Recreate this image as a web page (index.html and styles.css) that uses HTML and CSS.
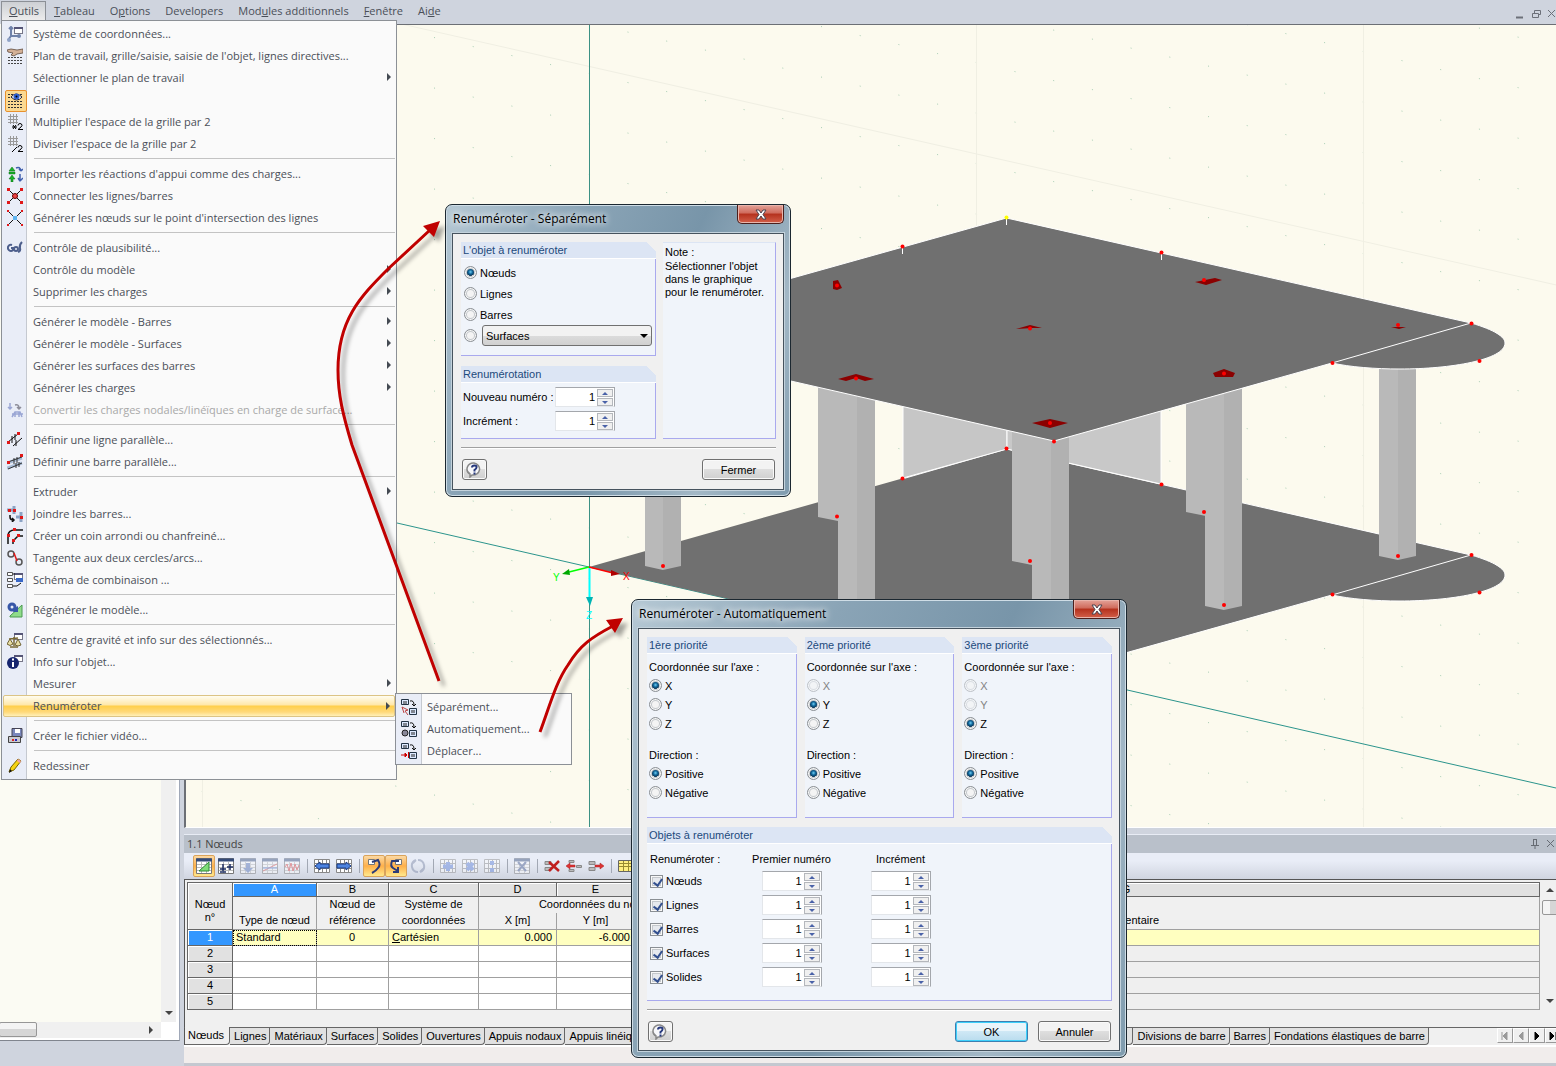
FILE: index.html
```html
<!DOCTYPE html>
<html lang="fr">
<head>
  <meta charset="UTF-8" />
  <meta name="viewport" content="width=device-width, initial-scale=1.0" />
  <title>Renuméroter</title>
  <link rel="stylesheet" href="styles.css">
</head>
<body>

<!-- icon set -->
<svg class="defs" width="0" height="0">
  <defs>
    <g id="win"><rect x="7.500" y="1.500" width="8" height="6" fill="#fff" stroke="#778"/><path d="M7 2h9" stroke="#557" stroke-width="2"/></g>
    <g id="redX" fill="#e01818"><rect x="0" y="0" width="3" height="3"/><rect x="13" y="0" width="3" height="3"/><rect x="0" y="13" width="3" height="3"/><rect x="13" y="13" width="3" height="3"/></g>
    <g id="i-coord"><path d="M4 2v8l-3 4M4 10h7M2 3l2-2 2 2" fill="none" stroke="#6f82aa" stroke-width="2"/><circle cx="2" cy="14" r="2" fill="#8fa3c8"/><circle cx="12" cy="10" r="2" fill="#6f82aa"/><use href="#win"/></g>
    <g id="i-plan"><path d="M1 9.500h15M1 12.500h15M1 15.500h15" stroke="#444" stroke-dasharray="2 1"/><path d="M0 2l4-1 6 1 6-1v4l-6 1-3 2-3-1 2-2-5-1z" fill="#d3b096" stroke="#5e4a3c" stroke-width=".8"/></g>
    <g id="i-grid"><path d="M1 2.500h15M1 5.500h15M1 9.500h15M1 12.500h15M1 15.500h15" stroke="#333" stroke-dasharray="2 1"/><path d="M4 5q5-6 11 0-5 6-11 0z" fill="#fff" stroke="#223"/><circle cx="9.500" cy="4.500" r="3" fill="#2f5fd0"/><circle cx="9.500" cy="4.500" r="1" fill="#000"/></g>
    <g id="hash"><path d="M3.500 0v10M6.500 0v10M9.500 0v10M1 2.500h10M1 5.500h10M1 8.500h10" stroke="#999"/></g>
    <g id="two"><path d="M11 11.500q0-2 2-2t2 2q0 1-4 4h5" fill="none" stroke="#000"/></g>
    <g id="i-mul"><use href="#hash"/><use href="#two"/><path d="M5 13h5M6 11l3 4M9 11l-3 4" stroke="#000"/></g>
    <g id="i-div"><use href="#hash"/><use href="#two"/><path d="M5 16l5-5" stroke="#000"/></g>
    <g id="i-import"><path d="M5 1l3 4H2zM2 6h6v2H2zM5 9l3 4H6v3H4v-3H2z" fill="#18b428" stroke="#0b6d16" stroke-width=".5"/><path d="M9 2q4-2 5 3M14 5l-2-2M14 5l2-2M13 8v6M13 15l-2-3M13 15l3-3" fill="none" stroke="#3f5fae" stroke-width="1.500"/></g>
    <g id="i-connect"><path d="M1 1l14 14M15 1L1 15" stroke="#111"/><circle cx="8" cy="8" r="2.500" fill="#e44" stroke="#600"/><use href="#redX"/></g>
    <g id="i-inter"><path d="M1 1l14 14M15 1L1 15" stroke="#111"/><rect x="6" y="6" width="4" height="4" fill="#5fb4f0"/><g fill="#e01818"><rect width="2" height="2"/><rect x="14" width="2" height="2"/><rect y="14" width="2" height="2"/><rect x="14" y="14" width="2" height="2"/></g></g>
    <g id="i-plaus" fill="none" stroke="#4d5f8c" stroke-width="2"><path d="M5 5a3 3 0 1 0 1 5V8H4"/><circle cx="9" cy="9" r="2"/><path d="M15 2q-3 3-2 6t-2 4"/></g>
    <g id="i-conv" fill="none" stroke="#9aa6d4" stroke-width="1.500"><path d="M3 1v6M1 5l2 2 2-2"/><path d="M8 3q4-1 4 3M10 5l2 2 2-2" stroke="#8c8c98"/><path d="M5 15l3-5h5l2 5M5 12h11M8 10v5M12 10v5"/></g>
    <g id="i-lpar"><path d="M1 10L11 2M6 14l9-8M5 4v7M8 2v6M9 8v6" stroke="#111"/><path d="M0 9h3v3H0zM10 0h3v3h-3z" fill="#e01818"/></g>
    <g id="i-bpar"><path d="M0 9l15-5M0 14l15-5" stroke="#a9bcd6" stroke-width="3"/><path d="M1 8l14-5M1 15l14-6M7 4v6M10 3v6M9 9v5M12 8v5" stroke="#333"/><path d="M0 7h3v3H0zM13 0h3v3h-3z" fill="#e01818"/></g>
    <g id="i-join"><path d="M0 4h6M7 0v8M14 6v10M9 11h6" stroke="#8ba3c4" stroke-width="3"/><path d="M3 9v2q0 3 3 3M5 12l2 2-2 2" fill="none" stroke="#111" stroke-width="1.500"/><path d="M1 3h3v3H1zM6 3h3v3H6zM13 10h3v3h-3z" fill="#e01818"/></g>
    <g id="i-round"><path d="M1 16V8q0-6 7-6h8M6 16v-3l5-5h5" fill="none" stroke="#111" stroke-width="1.500"/><path d="M0 6h3v3H0zM6 0h3v3H6zM5 11h3v3H5zM10 6h3v3h-3z" fill="#e01818"/></g>
    <g id="i-tang" fill="none" stroke="#555" stroke-width="1.500"><circle cx="4" cy="4" r="3"/><circle cx="12" cy="12" r="3"/><path d="M7 3l3 8" stroke="#e01818"/></g>
    <g id="i-schema"><path d="M.500.500h5v3h-5zM.500 6.500h5v3h-5zM.500 12.500h5v3h-5z" fill="#fff" stroke="#555"/><use href="#win"/><path d="M9 6h7v4H9z" fill="#3767c8"/><path d="M6 14h4l4-3M6 2h2" stroke="#111" fill="none"/></g>
    <g id="i-regen"><path d="M3 14L15 3v12H3z" fill="#8fdc8a" stroke="#4a9b50"/><circle cx="5" cy="5" r="3" fill="none" stroke="#3757a8" stroke-width="3"/><path d="M8 6l3-2v6H6z" fill="#3757a8"/></g>
    <g id="i-grav"><use href="#win"/><path d="M7 5v9M3 15h8M2 7l9-1" stroke="#7a6a35" stroke-width="1.500"/><path d="M0 12l3-5 3 5q-3 3-6 0zM8 13l3-6 3 6q-3 2-6 0z" fill="#e9dfa5" stroke="#6f6232"/></g>
    <g id="i-info"><use href="#win"/><circle cx="6" cy="9" r="6" fill="#15246e"/><path d="M6 8v5M6 4.500v2" stroke="#fff" stroke-width="2"/></g>
    <g id="i-video"><path d="M5 .500h10v9H5z" fill="#7a87bc" stroke="#445"/><path d="M8 1h5v4H8z" fill="#fff"/><path d="M1.500 8.500h12v6h-12z" fill="#c9c9cf" stroke="#444"/><path d="M5 11h2v2H5z" fill="#d22"/><path d="M8 11h2v2H8z" fill="#22b"/></g>
    <g id="i-pen"><path d="M2 14l2-5 7-8 3 2-7 9z" fill="#f5d313" stroke="#7a6500"/><path d="M11 1l3 2-1 2-3-2z" fill="#f2a0a8"/><path d="M2 15l1-4 2 2z" fill="#111"/></g>
    <g id="renum"><path d="M.500.500h7v5h-7zM8.500 9.500h7v6h-7z" fill="#dce9ff" stroke="#234"/><path d="M3 2v3M5 2v3M11 11v3M13 11v3" stroke="#222"/><path d="M9 2q4-1 4 4M11 5l2 2 2-2" fill="none" stroke="#111"/></g>
    <g id="i-sep"><use href="#renum"/><path d="M1 8l6 3-3 1 3 4M1 8l2 6" stroke="#b44" fill="none"/></g>
    <g id="i-auto"><use href="#renum"/><circle cx="4" cy="12" r="3" fill="#889" stroke="#222"/></g>
    <g id="i-move"><use href="#renum"/><path d="M0 12h4M4 10l2 2-2 2zM7.500 9v6" fill="#c00" stroke="#c00"/></g>
    <!-- table toolbar -->
    <g id="sheet"><path d="M.500.500h15v15H.500z" fill="#fff" stroke="#777"/><path d="M0 2h16" stroke="#344a78" stroke-width="3"/><path d="M1 6.500h14M1 9.500h14M1 12.500h14M5.500 4v11M10.500 4v11" stroke="#bbb"/></g>
    <g id="t-edit"><use href="#sheet"/><path d="M3 13L13 4v9z" fill="#7fdc78" stroke="#2c8a35"/></g>
    <g id="t-ins"><use href="#sheet"/><path d="M5 6v7M2 11h6M2 14h6M9 9h6M12 6v6" stroke="#1c2c60" stroke-width="1.500"/></g>
    <g id="t-down"><use href="#sheet"/><path d="M6 5h4v5h3l-5 5-5-5h3z" fill="#5573b8"/></g>
    <g id="t-flag"><use href="#sheet"/><path d="M1 13l6-3 8-4" stroke="#d44" fill="none"/><path d="M1 10h14" stroke="#36c"/></g>
    <g id="t-wave"><use href="#sheet"/><path d="M1 9l2-3 2 7 2-8 2 8 2-7 2 6 2-5" stroke="#d33" fill="none"/></g>
    <g id="grid2"><path d="M.500 1.500h15v13H.500zM1 5.500h14M1 10.500h14M4.500 2v12M8.500 2v12M12.500 2v12" fill="#fff" stroke="#888"/></g>
    <g id="t-left"><use href="#grid2"/><path d="M1 8l5-4v2h9v4H6v2z" fill="#4c83e0" stroke="#1b3c86"/></g>
    <g id="t-right"><use href="#grid2"/><path d="M15 8l-5-4v2H1v4h9v2z" fill="#4c83e0" stroke="#1b3c86"/></g>
    <g id="t-undo"><path d="M2.500 1.500h6v5h-6z" fill="#fff" stroke="#777"/><path d="M6 4l6-2q3 5 0 8-2 3-6 5" fill="none" stroke="#2c3c78" stroke-width="2"/></g>
    <g id="t-redo"><path d="M7.500 1.500h6v5h-6z" fill="#fff" stroke="#777"/><path d="M11 3H4Q2 8 5 10t5 3M10 9v5H5" fill="none" stroke="#2c3c78" stroke-width="2"/></g>
    <g id="t-sync" fill="none" stroke="#7a86a4" stroke-width="2"><path d="M6 2q-5 2-4 7t6 5M10 14q5-2 4-7T8 2M6 2l-3 3M10 14l3-3"/></g>
    <g id="t-add"><use href="#grid2"/><path d="M8 4v9M3 8.500h10" stroke="#5b7fd8" stroke-width="4"/></g>
    <g id="t-mulb"><use href="#grid2"/><path d="M5 5l6 7M11 5l-6 7" stroke="#5b7fd8" stroke-width="4"/></g>
    <g id="t-divb"><use href="#grid2"/><path d="M6 3h4v4H6zM6 10h4v4H6z" fill="#5b7fd8"/></g>
    <g id="t-cross"><use href="#sheet"/><path d="M4 4l8 9M12 4l-8 9" stroke="#44598f" stroke-width="2"/></g>
    <g id="bars"><path d="M1 3.500h6v3H1zM1 9.500h6v3H1z" fill="#bbb" stroke="#888"/></g>
    <g id="t-del"><use href="#bars"/><path d="M5 4l10 9M15 3L5 13" stroke="#c02020" stroke-width="2.500"/></g>
    <g id="t-rl"><path d="M3 2.500h5v2H3zM3 11.500h5v2H3zM10.500 7.500h5v2h-5z" fill="#bbb" stroke="#888"/><path d="M0 8l4-3v2h5v2H4v2z" fill="#d33" stroke="#a22" stroke-width=".5"/></g>
    <g id="t-rr"><use href="#bars"/><path d="M16 8l-4-3v2H7v2h5v2z" fill="#d33" stroke="#a22" stroke-width=".5"/></g>
    <g id="t-yellow"><path d="M.500 2.500h15v11H.500z" fill="#ffef80" stroke="#666"/><path d="M1 5.500h14M1 8.500h14M5.500 3v10M10.500 3v10" stroke="#998a30"/></g>
    <g id="help"><path d="M8 1a6.500 6 0 1 1-2 12l-2 2v-3A6.500 6 0 0 1 8 1z" fill="#f7f7fa" stroke="#888" stroke-width="1.500"/><path d="M6 5.500q0-2 2.500-2t2 2q0 1-2 2.500v1.500M8.500 10.500v2" fill="none" stroke="#26387c" stroke-width="2"/></g>
    <g id="close"><path d="M2 1h3l2 3 2-3h3L9 5.500 12 10H9L7 7l-2 3H2l3-4.500z" fill="#fff" stroke="#4b4450"/></g>
  </defs>
</svg>

<nav class="menubar">
  <button class="open"><u>O</u>utils</button>
  <button><u>T</u>ableau</button>
  <button>O<u>p</u>tions</button>
  <button>Developers</button>
  <button>Mod<u>u</u>les additionnels</button>
  <button><u>F</u>enêtre</button>
  <button>Ai<u>d</u>e</button>
  <svg class="mdi" width="40" height="12" fill="none" stroke="#6c7079"><path d="M1 9.500h7" stroke-width="2"/><path d="M17.500 5.500h6v4h-6zM19.500 5V2.500h6v4H24M33 2l7 7M40 2l-7 7"/></svg>
</nav>

<main>
  <aside class="tree">
    <div class="tree-body"></div>
    <div class="vbar"></div>
    <div class="hbar"><span class="thumb"></span></div>
  </aside>

  <section class="work">
    <div class="viewport">
      <svg class="scene" width="100%" height="100%">
        <defs>
          <pattern id="dots" width="38.700" height="50.500" patternUnits="userSpaceOnUse" patternTransform="matrix(1 .2326 0 1 821 26)">
            <rect width="1" height="1" fill="#a9cdb4"/>
          </pattern>
        </defs>
        <g transform="translate(-186 -25)">
          <rect x="186" y="25" width="3000" height="2000" fill="url(#dots)"/>
          <path d="M202.500 25v1200M976.500 25v1200M1363.500 25v1200M397 23l2000 452" fill="none" stroke="#f0efe3"/>
          <path d="M589.500 25v1200" stroke="#3c9184"/>
          <path d="M397 523l192 44 967 221 700 160" fill="none" stroke="#2b948c"/>

          <!-- lower slab -->
          <path d="M1006.500 449L1471 555C1495 562 1505 569 1505 575C1505 592 1450 601 1400 601C1375 601 1350 599 1332 595L1054 673L589 567z" fill="#707070"/>
          <path d="M902 479L1006.500 449L1471 555C1495 562 1505 569 1505 575C1505 592 1450 601 1400 601C1375 601 1350 599 1332 595L1054 673M1332 595l139-40" fill="none" stroke="#fff"/>

          <!-- walls -->
          <path d="M903 400l104 22v27l-104 29z" fill="#c6c6c6" stroke="#fff"/>
          <path d="M1007 422l154-20v82l-154-35z" fill="#c8c8c8" stroke="#fff"/>

          <!-- columns -->
          <g fill="#b9b9b9">
            <path d="M645 480h18v90l-18-4z"/>
            <path d="M818 380h20v141l-20-4z"/>
            <path d="M838 380h19v260h-19z"/>
            <path d="M1012 420h20v145l-20-4z"/>
            <path d="M1032 420h19v220h-19z"/>
            <path d="M1186 380h20v136l-20-4z"/>
            <path d="M1205 380h19v230l-19-4z"/>
            <path d="M1379 360h19v200l-19-4z"/>
          </g>
          <g fill="#b1b1b1">
            <path d="M663 480h18v86l-18 4z"/>
            <path d="M857 380h18v260h-18z"/>
            <path d="M1051 420h18v220h-18z"/>
            <path d="M1224 380h18v226l-18 4z"/>
            <path d="M1398 360h18v196l-18 4z"/>
          </g>

          <!-- upper slab -->
          <path d="M1006.500 218L1471 323C1495 330 1505 337 1505 343C1505 360 1450 369 1400 369C1375 369 1350 367 1332 363L1054 441L589 335z" fill="#707070" stroke="#fff"/>
          <path d="M1332 363l139-40M1006.500 219v6M902.500 248v6M1161.500 254v6" stroke="#fff"/>

          <g fill="#8b0000">
            <path d="M833 281l5-1 4 8-5 2-4-1z"/>
            <path d="M1016 329l14-4 12 3-9 0z"/>
            <path d="M838 379l18-5 18 5-9 2-9-3-10 3z"/>
            <path d="M1032 423l18-4 18 4-18 5z"/>
            <path d="M1195 282l20-4 7 2-16 5z"/>
            <path d="M1213 373l11-4 11 4-2 4h-18z"/>
            <path d="M1391 327h15l-7 2z"/>
          </g>
          <circle cx="1006.500" cy="217.500" r="2" fill="#ff0"/>
          <g fill="#f00">
            <circle cx="902.500" cy="246.500" r="2"/><circle cx="1161.500" cy="252.500" r="2"/>
            <circle cx="837" cy="285.500" r="2"/><circle cx="1030" cy="328.500" r="2"/>
            <circle cx="856" cy="378.500" r="2"/><circle cx="1050" cy="423" r="2"/>
            <circle cx="1054" cy="441.500" r="2"/><circle cx="1204" cy="280" r="2"/>
            <circle cx="1224" cy="373.500" r="2"/><circle cx="1398" cy="325" r="2"/>
            <circle cx="1471.500" cy="323.500" r="2"/><circle cx="1479.500" cy="361" r="2"/>
            <circle cx="1332.500" cy="363" r="2"/><circle cx="1006.500" cy="448.500" r="2"/>
            <circle cx="902.500" cy="478.500" r="2"/><circle cx="1161.500" cy="484.500" r="2"/>
            <circle cx="837" cy="516.500" r="2"/><circle cx="1030" cy="561" r="2"/>
            <circle cx="1204" cy="512" r="2"/><circle cx="1224" cy="605" r="2"/>
            <circle cx="1398" cy="556" r="2"/><circle cx="1471.500" cy="555" r="2"/>
            <circle cx="1479.500" cy="592.500" r="2"/><circle cx="1332.500" cy="594.500" r="2"/>
            <circle cx="663" cy="566" r="2"/>
          </g>

          <!-- axes -->
          <path d="M589 567l24 6" stroke="#f00" stroke-width="1.500"/>
          <path d="M620 574l-9 2v-6z" fill="#b00000"/>
          <path d="M589 567l-20 5" stroke="#0f0" stroke-width="1.500"/>
          <path d="M562 574l7-5 1 6z" fill="#00a800"/>
          <path d="M589.500 568v30" stroke="#0ff" stroke-width="2"/>
          <path d="M586 597h7l-3 9z" fill="#00b4b4"/>
          <text x="623" y="580" fill="#f00">X</text>
          <text x="553" y="581" fill="#0f0">Y</text>
          <text x="586" y="619" fill="#0ff">Z</text>
        </g>
      </svg>
    </div>

    <div class="panel">
      <header class="panel-title">
        <h2>1.1 Nœuds</h2>
        <svg width="24" height="12" fill="none" stroke="#666b73"><path d="M3.500 1v6M6.500 1v6M3 1.500h4M1 7.500h8M5 8v3M17 2l7 7M24 2l-7 7"/></svg>
      </header>
      <div class="toolbar">
        <button class="on"><svg><use href="#t-edit"/></svg></button>
        <button><svg><use href="#t-ins"/></svg></button>
        <button disabled><svg><use href="#t-down"/></svg></button>
        <button disabled><svg><use href="#t-flag"/></svg></button>
        <button disabled><svg><use href="#t-wave"/></svg></button>
        <i></i>
        <button><svg><use href="#t-left"/></svg></button>
        <button><svg><use href="#t-right"/></svg></button>
        <i></i>
        <button class="on"><svg><use href="#t-undo"/></svg></button>
        <button class="on"><svg><use href="#t-redo"/></svg></button>
        <button disabled><svg><use href="#t-sync"/></svg></button>
        <i></i>
        <button disabled><svg><use href="#t-add"/></svg></button>
        <button disabled><svg><use href="#t-mulb"/></svg></button>
        <button disabled><svg><use href="#t-divb"/></svg></button>
        <i></i>
        <button disabled><svg><use href="#t-cross"/></svg></button>
        <i></i>
        <button><svg><use href="#t-del"/></svg></button>
        <button><svg><use href="#t-rl"/></svg></button>
        <button><svg><use href="#t-rr"/></svg></button>
        <i></i>
        <button><svg><use href="#t-yellow"/></svg></button>
      </div>

      <div class="sheet">
        <table>
          <colgroup>
            <col class="c-num"><col class="c-a"><col class="c-b"><col class="c-c"><col class="c-d"><col class="c-d"><col class="c-d"><col>
          </colgroup>
          <thead>
            <tr class="letters">
              <th rowspan="3" class="corner">Nœud<br>n°</th>
              <th class="sel">A</th><th>B</th><th>C</th><th>D</th><th>E</th><th></th><th>G</th>
            </tr>
            <tr class="names">
              <th></th><th>Nœud de</th><th>Système de</th><th colspan="3">Coordonnées du nœud</th><th></th>
            </tr>
            <tr class="names last">
              <th>Type de nœud</th><th>référence</th><th>coordonnées</th><th>X [m]</th><th>Y [m]</th><th></th><th>Commentaire</th>
            </tr>
          </thead>
          <tbody>
            <tr class="current"><th>1</th><td class="focus">Standard</td><td class="mid">0</td><td><u>C</u>artésien</td><td class="num">0.000</td><td class="num">-6.000</td><td></td><td></td></tr>
            <tr><th>2</th><td></td><td></td><td></td><td></td><td></td><td></td><td></td></tr>
            <tr><th>3</th><td></td><td></td><td></td><td></td><td></td><td></td><td></td></tr>
            <tr><th>4</th><td></td><td></td><td></td><td></td><td></td><td></td><td></td></tr>
            <tr><th>5</th><td></td><td></td><td></td><td></td><td></td><td></td><td></td></tr>
          </tbody>
        </table>
        <div class="vbar up"><span class="thumb"></span></div>
      </div>

      <div class="tabs">
        <button class="active">Nœuds</button>
        <button>Lignes</button>
        <button>Matériaux</button>
        <button>Surfaces</button>
        <button>Solides</button>
        <button>Ouvertures</button>
        <button>Appuis nodaux</button>
        <button class="long">Appuis linéiques</button>
        <button>Divisions de barre</button>
        <button>Barres</button>
        <button>Fondations élastiques de barre</button>
        <div class="pager">
          <button disabled><svg><path d="M4 3v8M5 7l4-4v8z"/></svg></button>
          <button disabled><svg><path d="M5 7l4-4v8z"/></svg></button>
          <button><svg><path d="M5 3v8l4-4z"/></svg></button>
          <button><svg><path d="M4 3v8l4-4zM10 3v8"/></svg></button>
        </div>
      </div>
      <div class="status"></div>
    </div>
  </section>
</main>

<ul class="menu tools">
  <li><button><svg><use href="#i-coord"/></svg>Système de coordonnées...</button></li>
  <li><button><svg><use href="#i-plan"/></svg>Plan de travail, grille/saisie, saisie de l'objet, lignes directives...</button></li>
  <li><button class="sub">Sélectionner le plan de travail</button></li>
  <li><button class="checked"><svg><use href="#i-grid"/></svg>Grille</button></li>
  <li><button><svg><use href="#i-mul"/></svg>Multiplier l'espace de la grille par 2</button></li>
  <li><button><svg><use href="#i-div"/></svg>Diviser l'espace de la grille par 2</button></li>
  <li class="sep"></li>
  <li><button><svg><use href="#i-import"/></svg>Importer les réactions d'appui comme des charges...</button></li>
  <li><button><svg><use href="#i-connect"/></svg>Connecter les lignes/barres</button></li>
  <li><button><svg><use href="#i-inter"/></svg>Générer les nœuds sur le point d'intersection des lignes</button></li>
  <li class="sep"></li>
  <li><button><svg><use href="#i-plaus"/></svg>Contrôle de plausibilité...</button></li>
  <li><button class="sub">Contrôle du modèle</button></li>
  <li><button class="sub">Supprimer les charges</button></li>
  <li class="sep"></li>
  <li><button class="sub">Générer le modèle - Barres</button></li>
  <li><button class="sub">Générer le modèle - Surfaces</button></li>
  <li><button class="sub">Générer les surfaces des barres</button></li>
  <li><button class="sub">Générer les charges</button></li>
  <li><button disabled><svg><use href="#i-conv"/></svg>Convertir les charges nodales/linéïques en charge de surface...</button></li>
  <li class="sep"></li>
  <li><button><svg><use href="#i-lpar"/></svg>Définir une ligne parallèle...</button></li>
  <li><button><svg><use href="#i-bpar"/></svg>Définir une barre parallèle...</button></li>
  <li class="sep"></li>
  <li><button class="sub">Extruder</button></li>
  <li><button><svg><use href="#i-join"/></svg>Joindre les barres...</button></li>
  <li><button><svg><use href="#i-round"/></svg>Créer un coin arrondi ou chanfreiné...</button></li>
  <li><button><svg><use href="#i-tang"/></svg>Tangente aux deux cercles/arcs...</button></li>
  <li><button><svg><use href="#i-schema"/></svg>Schéma de combinaison ...</button></li>
  <li class="sep"></li>
  <li><button><svg><use href="#i-regen"/></svg>Régénérer le modèle...</button></li>
  <li class="sep"></li>
  <li><button><svg><use href="#i-grav"/></svg>Centre de gravité et info sur des sélectionnés...</button></li>
  <li><button><svg><use href="#i-info"/></svg>Info sur l'objet...</button></li>
  <li><button class="sub">Mesurer</button></li>
  <li><button class="sub hot">Renuméroter</button></li>
  <li class="sep"></li>
  <li><button><svg><use href="#i-video"/></svg>Créer le fichier vidéo...</button></li>
  <li class="sep"></li>
  <li><button><svg><use href="#i-pen"/></svg>Redessiner</button></li>
</ul>

<ul class="menu submenu">
  <li><button><svg><use href="#i-sep"/></svg>Séparément...</button></li>
  <li><button><svg><use href="#i-auto"/></svg>Automatiquement...</button></li>
  <li><button><svg><use href="#i-move"/></svg>Déplacer...</button></li>
</ul>

<div class="dialog dlg-sep">
  <div class="title"><h1>Renuméroter - Séparément</h1><button class="x"><svg width="14" height="11"><use href="#close"/></svg></button></div>
  <div class="client">
    <div class="sep-cols">
      <div class="stack">
        <section class="group">
          <h3>L'objet à renuméroter</h3>
          <div class="rows21">
            <label><input type="radio" name="obj" checked>Nœuds</label>
            <label><input type="radio" name="obj">Lignes</label>
            <label><input type="radio" name="obj">Barres</label>
            <div class="combo-row">
              <input type="radio" name="obj" aria-label="Surfaces">
              <span class="combo"><select aria-label="Surfaces"><option>Surfaces</option></select></span>
            </div>
          </div>
        </section>
        <section class="group">
          <h3>Renumérotation</h3>
          <div class="numbers">
            <label for="newNum">Nouveau numéro :</label>
            <span class="spin"><input type="text" id="newNum" value="1"><button class="inc"></button><button class="dec"></button></span>
            <label for="newInc">Incrément :</label>
            <span class="spin"><input type="text" id="newInc" value="1"><button class="inc"></button><button class="dec"></button></span>
          </div>
        </section>
      </div>
      <section class="group note">
        <p>Note :</p>
        <p>Sélectionner l'objet dans le graphique pour le renuméroter.</p>
      </section>
    </div>
    <hr>
    <footer>
      <button class="btn help"><svg width="17" height="16"><use href="#help"/></svg></button>
      <button class="btn">Fermer</button>
    </footer>
  </div>
</div>

<div class="dialog dlg-auto">
  <div class="title"><h1>Renuméroter - Automatiquement</h1><button class="x"><svg width="14" height="11"><use href="#close"/></svg></button></div>
  <div class="client">
    <div class="prios">
      <section class="group">
        <h3>1ère priorité</h3>
        <div class="rows19">
          <p>Coordonnée sur l'axe :</p>
          <label><input type="radio" name="ax1" checked>X</label>
          <label><input type="radio" name="ax1">Y</label>
          <label><input type="radio" name="ax1">Z</label>
          <p class="dir">Direction :</p>
          <label><input type="radio" name="dir1" checked>Positive</label>
          <label><input type="radio" name="dir1">Négative</label>
        </div>
      </section>
      <section class="group">
        <h3>2ème priorité</h3>
        <div class="rows19">
          <p>Coordonnée sur l'axe :</p>
          <label class="off"><input type="radio" name="ax2" disabled>X</label>
          <label><input type="radio" name="ax2" checked>Y</label>
          <label><input type="radio" name="ax2">Z</label>
          <p class="dir">Direction :</p>
          <label><input type="radio" name="dir2" checked>Positive</label>
          <label><input type="radio" name="dir2">Négative</label>
        </div>
      </section>
      <section class="group">
        <h3>3ème priorité</h3>
        <div class="rows19">
          <p>Coordonnée sur l'axe :</p>
          <label class="off"><input type="radio" name="ax3" disabled>X</label>
          <label class="off"><input type="radio" name="ax3" disabled>Y</label>
          <label><input type="radio" name="ax3" checked>Z</label>
          <p class="dir">Direction :</p>
          <label><input type="radio" name="dir3" checked>Positive</label>
          <label><input type="radio" name="dir3">Négative</label>
        </div>
      </section>
    </div>

    <section class="group objects">
      <h3>Objets à renuméroter</h3>
      <div class="obj-grid">
        <span>Renuméroter :</span><span class="mid">Premier numéro</span><span class="mid">Incrément</span>
        <label><input type="checkbox" checked>Nœuds</label>
        <span class="spin"><input type="text" value="1" aria-label="Nœuds, premier numéro"><button class="inc"></button><button class="dec"></button></span>
        <span class="spin"><input type="text" value="1" aria-label="Nœuds, incrément"><button class="inc"></button><button class="dec"></button></span>
        <label><input type="checkbox" checked>Lignes</label>
        <span class="spin"><input type="text" value="1" aria-label="Lignes, premier numéro"><button class="inc"></button><button class="dec"></button></span>
        <span class="spin"><input type="text" value="1" aria-label="Lignes, incrément"><button class="inc"></button><button class="dec"></button></span>
        <label><input type="checkbox" checked>Barres</label>
        <span class="spin"><input type="text" value="1" aria-label="Barres, premier numéro"><button class="inc"></button><button class="dec"></button></span>
        <span class="spin"><input type="text" value="1" aria-label="Barres, incrément"><button class="inc"></button><button class="dec"></button></span>
        <label><input type="checkbox" checked>Surfaces</label>
        <span class="spin"><input type="text" value="1" aria-label="Surfaces, premier numéro"><button class="inc"></button><button class="dec"></button></span>
        <span class="spin"><input type="text" value="1" aria-label="Surfaces, incrément"><button class="inc"></button><button class="dec"></button></span>
        <label><input type="checkbox" checked>Solides</label>
        <span class="spin"><input type="text" value="1" aria-label="Solides, premier numéro"><button class="inc"></button><button class="dec"></button></span>
        <span class="spin"><input type="text" value="1" aria-label="Solides, incrément"><button class="inc"></button><button class="dec"></button></span>
      </div>
    </section>
    <hr>
    <footer>
      <button class="btn help"><svg width="17" height="16"><use href="#help"/></svg></button>
      <button class="btn default">OK</button>
      <button class="btn">Annuler</button>
    </footer>
  </div>
</div>

<!-- red pointers from the submenu to the dialogs -->
<svg class="pointers" width="700" height="760">
  <g fill="none" stroke="#c00000" stroke-width="3">
    <path d="M439 681L352 445C343 415 338 395 338 370C338 320 360 297 388 269L430 230"/>
    <path d="M540 732C550 705 556 682 568 665C580 645 592 637 613 626"/>
  </g>
  <path d="M440 221l-17 5 11 11zM623 618l-17 2 9 13z" fill="#c00000"/>
</svg>

</body>
</html>
```
FILE: styles.css
```css
* {
  box-sizing: border-box;
}
body {
  margin: 0;
  height: 100vh;
  display: flex;
  flex-direction: column;
  overflow: hidden;
  position: relative;
  background: #cfd4de;
  font-family: "Liberation Sans", Arial, sans-serif;
  font-size: 11px;
  color: #000;
}
button, input, select {
  font: inherit;
  color: inherit;
  margin: 0;
  padding: 0;
}
h1, h2, h3, p, ul {
  margin: 0;
  padding: 0;
  font-weight: normal;
}
.defs {
  position: absolute;
}

/* menu bar */
.menubar {
  display: flex;
  height: 24px;
  flex: none;
  padding: 1px 0 3px 1px;
  font-family: "Open Sans", "Noto Sans", sans-serif;
}
.menubar button {
  border: 1px solid transparent;
  background: none;
  padding: 0 6px 0 7px;
  line-height: 18px;
  color: #4a4f58;
}
.menubar .open {
  border-color: #8c9096 #8c9096 #ececec;
  background: linear-gradient(#cdd0d4, #ececec);
}
.mdi {
  margin: 7px 1px 0 auto;
}

main {
  flex: 1;
  display: flex;
  min-height: 0;
}

/* left tree */
.tree {
  width: 180px;
  flex: none;
  display: grid;
  grid-template-columns: 1fr 15px;
  grid-template-rows: 1fr 16px;
  padding: 0 3px 2px 0;
  margin-bottom: 25px;
  background: #fff;
  border-right: 1px solid #a0a8b8;
  border-bottom: 1px solid #80858e;
}
.tree-body {
  background: #fbfbf3;
}
.vbar, .hbar {
  background: #f0f0f0;
  position: relative;
}
.vbar::after, .hbar::after, .vbar.up::before {
  content: "";
  position: absolute;
  border: 4px solid transparent;
}
.vbar::after {
  left: 4px;
  bottom: 3px;
  border-top-color: #444;
}
.vbar.up::before {
  left: 4px;
  top: 2px;
  border-bottom-color: #444;
}
.hbar::after {
  right: 4px;
  top: 4px;
  border-left-color: #444;
}
.thumb {
  display: block;
  border: 1px solid #979797;
  border-radius: 2px;
  background: linear-gradient(#f4f4f4 50%, #d6d6d6 50%);
}
.hbar .thumb {
  width: 38px;
  height: 15px;
  margin-left: -1px;
}
.sheet .thumb {
  height: 15px;
  margin-top: 18px;
  background: linear-gradient(90deg, #f4f4f4 50%, #d6d6d6 50%);
}

/* work area */
.work {
  flex: 1;
  min-width: 0;
  margin-left: 4px;
  display: flex;
  flex-direction: column;
}
.viewport {
  flex: 1;
  min-height: 0;
  background: #fcfaee;
  border-top: 1px solid #6c6f75;
  border-left: 2px solid #6c6f75;
  border-bottom: 1px solid #fff;
}
.scene {
  display: block;
}
.scene text {
  font-size: 10px;
}

.panel {
  flex: none;
  margin-top: 6px;
  overflow: hidden;
}
.panel-title {
  display: flex;
  justify-content: space-between;
  align-items: center;
  height: 19px;
  padding: 0 2px 0 3px;
  background: #b9c0ca;
  border-top: 1px solid #e8ecf5;
}
.panel-title h2 {
  font: 11px/18px "Open Sans", "Noto Sans", sans-serif;
  color: #444;
}
.toolbar {
  display: flex;
  align-items: center;
  height: 26px;
  padding-left: 9px;
  background: linear-gradient(#e9edf7 30%, #d0d5e0);
}
.toolbar button {
  width: 22px;
  height: 22px;
  flex: none;
  padding: 2px;
  border: 1px solid transparent;
  background: none;
}
.toolbar .on {
  border-color: #d9a35b;
  border-radius: 2px;
  background: linear-gradient(#fbd9a4, #ffb04a 50%, #ffe98c);
}
.toolbar svg {
  display: block;
  width: 16px;
  height: 16px;
}
.toolbar button:disabled svg {
  opacity: .45;
}
.toolbar i {
  width: 1px;
  height: 14px;
  flex: none;
  margin: 0 3px 0 4px;
  background: #a2a8b4;
}

/* data sheet */
.sheet {
  display: flex;
  height: 148px;
  padding: 2px 0 0 2px;
  background: #f0f0f0;
  border-top: 1px solid #555;
  border-left: 1px solid #555;
}
.sheet table {
  flex: 1;
  table-layout: fixed;
  border-collapse: separate;
  border-spacing: 0;
  align-self: flex-start;
  border-left: 1px solid #666;
  border-top: 1px solid #666;
}
.c-num {
  width: 45px;
}
.c-a {
  width: 84px;
}
.c-b {
  width: 72px;
}
.c-c {
  width: 90px;
}
.c-d {
  width: 78px;
}
.sheet th, .sheet td {
  height: 16px;
  padding: 0;
  line-height: 15px;
  font-weight: normal;
  white-space: nowrap;
  overflow: hidden;
  border-right: 1px solid #a0a0a0;
  border-bottom: 1px solid #a0a0a0;
}
.sheet .letters th, .sheet tbody th {
  height: 14px;
  line-height: 13px;
  background: #e1e1e1;
  border-right-color: #666;
  border-bottom-color: #666;
  box-shadow: inset 1px 1px #fff;
}
.sheet tbody th {
  height: 16px;
  line-height: 15px;
}
.sheet .letters .corner {
  height: auto;
  padding-top: 10px;
  line-height: 13px;
  background: #e8e8e8;
}
.sheet .letters .sel, .sheet .current th {
  background: #3397ff;
  color: #fff;
}
.sheet .names th {
  line-height: 14px;
  vertical-align: top;
  background: #f0f0f0;
  border-bottom: none;
}
.sheet .names.last th {
  height: 17px;
  border-bottom: 1px solid #a0a0a0;
}
.sheet td {
  padding: 0 4px 0 3px;
  background: #fff;
}
.sheet td:last-child {
  background: #efefef;
}
.sheet .current td {
  background: #ffffc0;
}
.sheet .focus {
  outline: 1px dotted #000;
  outline-offset: -1px;
}
.mid {
  text-align: center;
}
.num {
  text-align: right;
}
.sheet .vbar {
  width: 16px;
  margin: 0 -2px 17px 2px;
}

.tabs {
  display: flex;
  height: 18px;
  background: #f0f0f0;
  border-top: 1px solid #666;
  border-left: 1px solid #555;
}
.tabs > button {
  flex: none;
  padding: 0 3px 0 4px;
  border: 1px solid #666;
  border-width: 0 1px 1px 0;
  border-radius: 0 0 4px 0;
  background: #e1e1e1;
  text-align: left;
  line-height: 17px;
}
.tabs .active {
  margin-top: -1px;
  padding: 0 5px 0 3px;
  background: #f0f0f0;
}
.tabs .long {
  width: 568px;
}
.pager {
  display: flex;
  margin: 0 -5px 0 auto;
}
.pager button {
  width: 16px;
  height: 15px;
  flex: none;
  border: 1px solid #fff;
  border-right-color: #999;
  border-bottom-color: #999;
  background: #f0f0f0;
}
.pager svg {
  display: block;
  width: 14px;
  height: 13px;
  stroke: #000;
}
.pager button:disabled svg {
  fill: #999;
  stroke: #999;
}
.status {
  height: 21px;
  background: #f1edec;
  border-top: 2px solid #fff;
  border-bottom: 3px solid #c4c8d0;
}

/* drop-down menus */
.menu {
  position: absolute;
  list-style: none;
  border: 1px solid #8c9096;
  background: linear-gradient(90deg, #e9edf7 24px, #c5c9d0 24px, #c5c9d0 25px, #fafafa 25px);
  font-family: "Open Sans", "Noto Sans", sans-serif;
  color: #4a4f58;
}
.menu button {
  display: flex;
  align-items: center;
  position: relative;
  width: 100%;
  height: 22px;
  padding: 0 0 2px 30px;
  border: none;
  background: none;
  white-space: nowrap;
}
.menu svg {
  position: absolute;
  left: 4px;
  top: 3px;
  width: 16px;
  height: 16px;
}
.menu button:disabled {
  color: #a9a9a9;
}
.menu .sep {
  height: 1px;
  margin: 3px 0 4px 31px;
  background: #c3c3c3;
}
.menu .sub::after {
  content: "";
  position: absolute;
  right: 0;
  top: 6px;
  border: 4px solid transparent;
  border-left-color: #444a52;
}
.menu .checked::before {
  content: "";
  position: absolute;
  left: 2px;
  top: 1px;
  width: 20px;
  height: 20px;
  border: 1px solid #e8912d;
  border-radius: 2px;
  background: #fbd991;
}
.menu .hot {
  border: 1px solid #dcc485;
  border-radius: 2px;
  padding-left: 29px;
  background: linear-gradient(#fffdf0, #ffe7a8 45%, #ffcf4a 50%, #ffd97a 80%, #fff0b8);
}
.tools {
  left: 1px;
  top: 20px;
  width: 396px;
  padding: 2px 1px;
}
.submenu {
  left: 395px;
  top: 693px;
  width: 177px;
  padding: 2px 0;
  background: linear-gradient(90deg, #e9edf7 25px, #c5c9d0 25px, #c5c9d0 26px, #fafafa 26px);
}
.submenu button {
  padding-left: 31px;
}
.submenu svg {
  left: 5px;
}

/* dialogs */
.dialog {
  position: absolute;
  padding: 0 6px 6px;
  border: 1px solid #1b2730;
  border-radius: 7px;
  background: linear-gradient(115deg, #b5c8d4, #8aa4b6 30%, #7895a9 55%, #a3b8c6 80%, #7f9bae);
  box-shadow: inset 0 0 0 1px #cfdde6;
}
.dlg-sep {
  left: 445px;
  top: 204px;
  width: 346px;
}
.dlg-auto {
  left: 631px;
  top: 599px;
  width: 496px;
}
.title {
  display: flex;
  justify-content: space-between;
  height: 28px;
}
.title h1 {
  padding-left: 1px;
  font: 12px/28px "Open Sans", "Noto Sans", sans-serif;
  text-shadow: 0 0 6px #fff, 0 0 10px #fff;
}
.x {
  width: 47px;
  height: 19px;
  border: 1px solid #4c1f1c;
  border-top: none;
  border-radius: 0 0 5px 5px;
  background: linear-gradient(#e4a399, #cf6a5b 45%, #b4311d 50%, #d3604a);
  box-shadow: inset 0 0 0 1px #e9b5ac;
}
.x svg {
  display: block;
  margin: 0 auto;
}
.client {
  padding: 8px 7px 9px 8px;
  border: 1px solid #46535e;
  box-shadow: 0 0 0 1px #c3d2dc;
  background: #f0f0f0;
}
.dlg-auto .client {
  padding-bottom: 8px;
}
.sep-cols {
  display: grid;
  grid-template-columns: 195px 1fr;
  gap: 7px;
}
.stack {
  display: flex;
  flex-direction: column;
  gap: 10px;
}
.group {
  background: #f0f4fa;
  border: 1px solid #a9a9ee;
  border-width: 0 1px 1px 0;
  position: relative;
}
.group h3 {
  height: 17px;
  font-size: 11px;
  line-height: 17px;
  padding-left: 2px;
  margin-right: -1px;
  color: #1c4a7c;
  background: linear-gradient(225deg, #f0f0f0 7px, #dce5f4 7px);
  border-bottom: 1px solid #fff;
}
.group label, .group p {
  display: flex;
  align-items: center;
}
.rows21 {
  padding: 3px 3px 9px;
}
.rows21 label, .combo-row {
  display: flex;
  align-items: center;
  height: 21px;
}
.rows19 {
  padding: 3px 2px 15px;
}
.rows19 > * {
  height: 19px;
}
.rows19 .dir {
  margin-top: 12px;
}
.off {
  color: #838383;
}
.numbers {
  display: grid;
  grid-template-columns: 92px 60px;
  grid-auto-rows: 24px;
  align-items: center;
  padding: 2px 2px 5px;
}
.group.note {
  padding: 2px;
  border-top: 1px solid #dce5f4;
}
.note p {
  display: block;
  line-height: 13px;
}
.note p:first-child {
  line-height: 15px;
}
.prios {
  display: grid;
  grid-template-columns: repeat(3, 1fr);
  gap: 8px;
}
.objects {
  margin-top: 9px;
}
.obj-grid {
  display: grid;
  grid-template-columns: 87px 109px 109px;
  grid-template-rows: 20px;
  grid-auto-rows: 24px;
  align-items: center;
  padding: 5px 3px 11px;
}
.obj-grid .spin {
  justify-self: center;
}

input[type="radio"], input[type="checkbox"] {
  appearance: none;
  flex: none;
  width: 13px;
  height: 13px;
  margin-right: 3px;
  border: 1px solid #8a8f94;
  background: #f4f4f4;
  box-shadow: inset 0 0 0 1px #f8f8f8, inset 0 0 0 2px #c4c8cc;
}
input[type="radio"] {
  border-radius: 50%;
}
input[type="radio"]:checked {
  background: radial-gradient(circle at 50% 45%, #6fd0f5 0, #12689c 2px, #0b2f4c 4px, #e8e8e8 4px);
}
input[type="radio"]:disabled {
  opacity: .5;
}
input[type="checkbox"]:checked {
  background: #e6e9ee;
  position: relative;
}
input[type="checkbox"]:checked::after {
  content: "";
  position: absolute;
  left: 4px;
  top: 1px;
  width: 4px;
  height: 7px;
  border: solid #33508f;
  border-width: 0 2px 2px 0;
  transform: rotate(35deg);
}
.combo {
  position: relative;
  flex: 1;
  margin-left: 2px;
}
.combo-row input {
  margin-right: 3px;
}
.combo select {
  appearance: none;
  display: block;
  width: 100%;
  height: 21px;
  padding-left: 3px;
  border: 1px solid #707070;
  border-radius: 3px;
  background: linear-gradient(#f2f2f2 50%, #dcdcdc 50%, #d0d0d0);
}
.combo::after {
  content: "";
  position: absolute;
  right: 4px;
  top: 9px;
  border: 4px solid transparent;
  border-top-color: #000;
}
.spin {
  display: grid;
  grid-template-columns: 1fr 16px;
  grid-template-rows: 8px 8px;
  row-gap: 1px;
  width: 60px;
  height: 20px;
  padding: 1px 1px 1px 0;
  border: 1px solid #a4a7ac;
  border-color: #a4a7ac #a4a7ac #e3e6ea #e3e6ea;
  background: #fff;
}
.spin input {
  grid-row: 1 / 3;
  width: 100%;
  border: none;
  padding: 0 2px 2px 0;
  background: none;
  text-align: right;
}
.spin button {
  border: 1px solid #b4b7bc;
  background: #f0f0f0;
  position: relative;
}
.spin button::after {
  content: "";
  position: absolute;
  left: 4px;
  border: 3px solid transparent;
}
.spin .inc::after {
  top: -1px;
  border-bottom-color: #4a62a8;
}
.spin .dec::after {
  top: 2px;
  border-top-color: #4a62a8;
}
hr {
  height: 2px;
  margin: 8px 0 10px;
  border: none;
  border-top: 1px solid #a0a0a0;
  border-bottom: 1px solid #fff;
}
footer {
  display: flex;
  gap: 10px;
  padding: 0 1px;
}
.btn {
  width: 73px;
  height: 21px;
  border: 1px solid #707070;
  border-radius: 3px;
  background: linear-gradient(#f3f3f3 45%, #dedede 50%, #d0d0d0);
  box-shadow: inset 0 0 0 1px #fafafa;
}
.btn.help {
  width: 25px;
  margin-right: auto;
}
.help svg {
  display: block;
  margin: 0 auto;
}
.btn.default {
  border-color: #3c7fb1;
  background: linear-gradient(#eaf5fb 45%, #cfe8f5 50%, #b9dcee);
  box-shadow: inset 0 0 0 1px #3cd0fb;
}

.pointers {
  position: absolute;
  left: 0;
  top: 0;
  pointer-events: none;
  filter: drop-shadow(5px 5px 2px rgba(0, 0, 0, .35));
}
```
